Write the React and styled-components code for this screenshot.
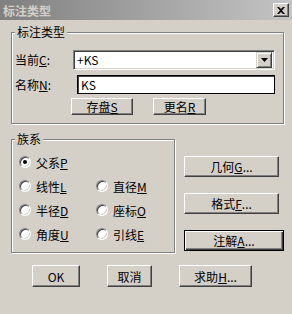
import React from 'react';
import styled, { createGlobalStyle, css } from 'styled-components';

const GlobalStyle = createGlobalStyle`
  html, body {
    margin: 0;
    padding: 0;
    background: #d4d0c8;
  }
  body {
    font-family: "Noto Sans CJK SC", "Liberation Sans", sans-serif;
    font-size: 12px;
    color: #000;
  }
`;

const Window = styled.div`
  width: 292px;
  height: 314px;
  background: #d4d0c8;
  display: flex;
  flex-direction: column;
  overflow: hidden;
`;

const TitleBar = styled.div`
  height: 20px;
  flex: none;
  display: flex;
  align-items: center;
  justify-content: space-between;
  padding: 0 3px 0 3px;
  background: linear-gradient(to right, #808080, #c4c4c4);
  box-sizing: border-box;
`;

const Title = styled.span`
  color: #d4d0c8;
  font-weight: bold;
  font-size: 12px;
`;

const CloseButton = styled.div`
  width: 14px;
  height: 12px;
  background: #d4d0c8;
  border: 1px solid;
  border-color: #fff #404040 #404040 #fff;
  box-shadow: inset -1px -1px #808080;
  display: flex;
  align-items: center;
  justify-content: center;
`;

const Body = styled.div`
  display: flex;
  flex-direction: column;
  padding: 12px 0 0 11px;
`;

const Group = styled.div`
  position: relative;
  box-sizing: border-box;
  flex: none;
  width: ${p => p.$w}px;
  height: ${p => p.$h}px;
  border: 1px solid #808080;
  box-shadow: 1px 1px 0 #fff, inset 1px 1px 0 #fff;
  padding: ${p => p.$pad};
`;

const Legend = styled.span`
  position: absolute;
  top: -8px;
  left: 3px;
  padding: 0 2px;
  background: #d4d0c8;
  line-height: 14px;
`;

const FieldRow = styled.div`
  display: flex;
  align-items: center;
  height: 19px;
  margin-bottom: ${p => p.$mb || 0}px;
`;

const FieldLabel = styled.span`
  width: ${p => p.$w}px;
  flex: none;
`;

const Key = styled.span`
  text-decoration: underline;
  text-underline-offset: 1px;
`;

const Combo = styled.div`
  box-sizing: border-box;
  width: 202px;
  height: 20px;
  background: #fff;
  border: 1px solid;
  border-color: #808080 #fff #fff #808080;
  box-shadow: inset 1px 1px #404040, inset -1px -1px #d4d0c8;
  display: flex;
  align-items: center;
  justify-content: space-between;
  padding: 1px 2px 1px 3px;
`;

const DropButton = styled.div`
  box-sizing: border-box;
  width: 16px;
  height: 16px;
  background: #d4d0c8;
  border: 1px solid;
  border-color: #d4d0c8 #404040 #404040 #d4d0c8;
  box-shadow: inset 1px 1px #fff, inset -1px -1px #808080;
  display: flex;
  align-items: center;
  justify-content: center;
`;

const TextInput = styled.div`
  box-sizing: border-box;
  width: 198px;
  height: 19px;
  background: #fff;
  border: 1px solid #000;
  box-shadow: inset 1px 1px #404040;
  padding: 0 3px;
  display: flex;
  align-items: center;
`;

const ButtonRow = styled.div`
  display: flex;
  gap: ${p => p.$gap}px;
  padding-left: ${p => p.$indent}px;
`;

const Button = styled.div`
  box-sizing: border-box;
  width: ${p => p.$w}px;
  height: ${p => p.$h || 21}px;
  display: flex;
  align-items: center;
  justify-content: center;
  background: #d4d0c8;
  border: 1px solid;
  border-color: #fff #404040 #404040 #fff;
  box-shadow: inset -1px -1px #808080;
  ${p => p.$default && css`
    border-color: #000;
    box-shadow: inset 1px 1px #fff, inset -1px -1px #404040, inset -2px -2px #808080;
  `}
`;

const Middle = styled.div`
  display: flex;
  margin-top: 15px;
  gap: 9px;
`;

const RadioGrid = styled.div`
  display: grid;
  grid-template-columns: 77px auto;
  grid-auto-rows: 24px;
  padding: 10px 0 0 7px;
`;

const RadioItem = styled.div`
  display: flex;
  align-items: center;
  gap: 5px;
  grid-column: ${p => p.$span ? '1 / span 2' : 'auto'};
`;

const RadioDot = styled.span`
  position: relative;
  box-sizing: border-box;
  width: 12px;
  height: 12px;
  border-radius: 50%;
  background: #fff;
  border: 1px solid;
  border-color: #808080 #fff #fff #808080;
  box-shadow: inset 1px 1px #404040, inset -1px -1px #d4d0c8;
  ${p => p.$checked && css`
    &::after {
      content: '';
      position: absolute;
      left: 3px;
      top: 3px;
      width: 4px;
      height: 4px;
      border-radius: 50%;
      background: #000;
    }
  `}
`;

const SideButtons = styled.div`
  display: flex;
  flex-direction: column;
  gap: 16px;
  padding-top: 17px;
`;

const Bottom = styled.div`
  display: flex;
  margin-top: 12px;
  padding-left: 21px;
  gap: 27px;
`;

const radios = [
  { label: '父系', key: 'P', checked: true, span: true },
  { label: '线性', key: 'L' },
  { label: '直径', key: 'M' },
  { label: '半径', key: 'D' },
  { label: '座标', key: 'O' },
  { label: '角度', key: 'U' },
  { label: '引线', key: 'E' },
];

export default function App() {
  return (
    <Window>
      <GlobalStyle />
      <TitleBar>
        <Title>标注类型</Title>
        <CloseButton>
          <svg width="8" height="7" viewBox="0 0 8 7">
            <path d="M0 0h2l2 2 2-2h2L5 3.5 8 7H6L4 5 2 7H0l3-3.5z" fill="#000" />
          </svg>
        </CloseButton>
      </TitleBar>
      <Body>
        <Group $w={273} $h={92} $pad="17px 0 0 3px">
          <Legend>标注类型</Legend>
          <FieldRow $mb={6}>
            <FieldLabel $w={58}>当前<Key>C</Key>:</FieldLabel>
            <Combo>
              <span>+KS</span>
              <DropButton>
                <svg width="7" height="4" viewBox="0 0 7 4">
                  <polygon points="0,0 7,0 3.5,4" fill="#000" />
                </svg>
              </DropButton>
            </Combo>
          </FieldRow>
          <FieldRow $mb={4}>
            <FieldLabel $w={62}>名称<Key>N</Key>:</FieldLabel>
            <TextInput>KS</TextInput>
          </FieldRow>
          <ButtonRow $gap={20} $indent={56}>
            <Button $w={62} $h={17}>存盘<Key>S</Key></Button>
            <Button $w={53} $h={17}>更名<Key>R</Key></Button>
          </ButtonRow>
        </Group>
        <Middle>
          <Group $w={164} $h={114} $pad="0">
            <Legend>族系</Legend>
            <RadioGrid>
              {radios.map(r => (
                <RadioItem key={r.key} $span={r.span}>
                  <RadioDot $checked={r.checked} />
                  <span>{r.label}<Key>{r.key}</Key></span>
                </RadioItem>
              ))}
            </RadioGrid>
          </Group>
          <SideButtons>
            <Button $w={95}>几何<Key>G</Key>...</Button>
            <Button $w={95}>格式<Key>F</Key>...</Button>
            <Button $w={100} $default>注解<Key>A</Key>...</Button>
          </SideButtons>
        </Middle>
        <Bottom>
          <Button $w={48} $h={22}>OK</Button>
          <Button $w={45} $h={22}>取消</Button>
          <Button $w={73} $h={22}>求助<Key>H</Key>...</Button>
        </Bottom>
      </Body>
    </Window>
  );
}
